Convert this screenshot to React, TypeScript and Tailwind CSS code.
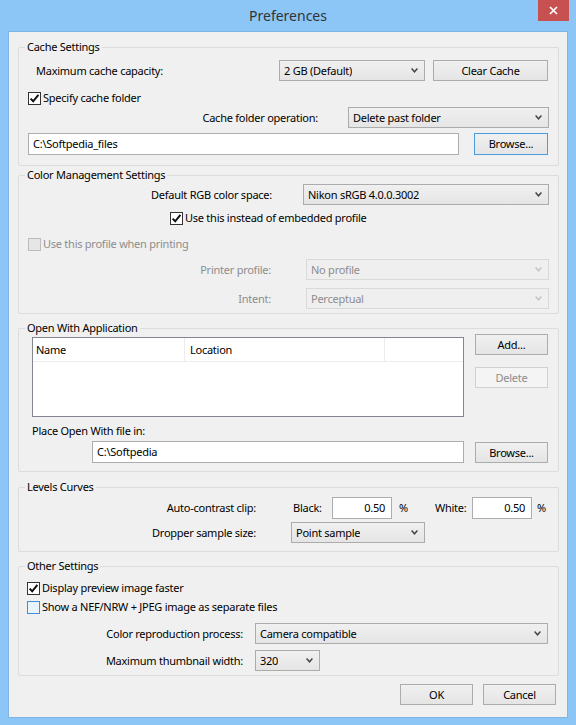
import type { ReactNode } from "react";

function Chevron({ disabled }: { disabled?: boolean }) {
  return (
    <svg width="7" height="5" viewBox="0 0 7 5" className="shrink-0">
      <path
        d="M0.6 0.6 L3.5 3.8 L6.4 0.6"
        fill="none"
        stroke={disabled ? "#c4c4c4" : "#454545"}
        strokeWidth="1.5"
      />
    </svg>
  );
}

function Combo({
  value,
  className = "",
  disabled,
}: {
  value: string;
  className?: string;
  disabled?: boolean;
}) {
  return (
    <div
      className={`flex h-[21px] shrink-0 items-center justify-between border pl-[4px] pr-[6px] ${
        disabled
          ? "border-[#d9d9d9] bg-[#efefef] text-[#8d8d8d]"
          : "border-[#acacac] bg-linear-to-b from-[#f0f0f0] to-[#e5e5e5] text-black"
      } ${className}`}
    >
      <span className="truncate">{value}</span>
      <Chevron disabled={disabled} />
    </div>
  );
}

function Btn({
  children,
  className = "",
  focused,
  disabled,
}: {
  children: ReactNode;
  className?: string;
  focused?: boolean;
  disabled?: boolean;
}) {
  let look = "border-[#acacac] bg-linear-to-b from-[#f0f0f0] to-[#e5e5e5] text-black";
  if (focused) look = "border-[#4a9ae4] bg-linear-to-b from-[#f0f0f0] to-[#e5e5e5] text-black";
  if (disabled) look = "border-[#d0d0d0] bg-[#f4f4f4] text-[#8d8d8d]";
  return (
    <button
      type="button"
      className={`flex h-[21px] shrink-0 items-center justify-center border ${look} ${className}`}
    >
      {children}
    </button>
  );
}

function Check({
  checked,
  disabled,
  hover,
}: {
  checked?: boolean;
  disabled?: boolean;
  hover?: boolean;
}) {
  let look = "border-[#333333] bg-white";
  if (disabled) look = "border-[#bcbcbc] bg-[#e6e6e6]";
  if (hover) look = "border-[#3c8fe0] bg-[#e9f3fd]";
  return (
    <div className={`flex h-[13px] w-[13px] shrink-0 items-center justify-center border ${look}`}>
      {checked && (
        <svg width="11" height="11" viewBox="0 0 11 11">
          <path d="M1.6 5.6 L4.2 8.3 L9.4 1.8" fill="none" stroke="#111" strokeWidth="2" />
        </svg>
      )}
    </div>
  );
}

function Group({
  title,
  className = "",
  children,
}: {
  title: string;
  className?: string;
  children: ReactNode;
}) {
  return (
    <fieldset className={`ml-[9px] w-[541px] rounded-[2px] border border-[#dcdcdc] ${className}`}>
      <legend className="ml-[6px] px-[2px] leading-[16px]">{title}</legend>
      {children}
    </fieldset>
  );
}

export default function App() {
  return (
    <div className="flex h-[725px] w-[576px] flex-col bg-[#8cc6f7] font-['Noto_Sans',sans-serif] text-[11px] leading-[16px] tracking-[-0.25px] text-black">
      <div className="relative flex h-[31px] shrink-0 items-center justify-center">
        <span className="text-[14px] tracking-normal text-[#333]">Preferences</span>
        <div className="absolute right-[7px] top-0 flex h-[21px] w-[31px] items-center justify-center bg-[#c75050]">
          <svg width="9" height="9" viewBox="0 0 9 9">
            <path d="M1 1 L8 8 M8 1 L1 8" stroke="#fff" strokeWidth="1.7" />
          </svg>
        </div>
      </div>

      <div className="mx-[8px] mb-[7px] flex flex-1 flex-col border border-[#7fb4e6] bg-[#f0f0f0]">
        {/* Cache Settings */}
        <Group title="Cache Settings" className="mt-[7px] pb-[10px]">
          <div className="mt-[5px] flex items-center">
            <span className="ml-[17px] w-[243px]">Maximum cache capacity:</span>
            <Combo value="2 GB (Default)" className="w-[146px]" />
            <Btn className="ml-[8px] w-[115px]">Clear Cache</Btn>
          </div>
          <div className="mt-[9px] flex h-[16px] items-center gap-[2px] pl-[9px]">
            <Check checked />
            <span>Specify cache folder</span>
          </div>
          <div className="mt-[1px] flex items-center justify-end pr-[9px]">
            <span className="mr-[30px]">Cache folder operation:</span>
            <Combo value="Delete past folder" className="w-[201px]" />
          </div>
          <div className="mt-[5px] flex items-center pl-[9px]">
            <div className="flex h-[22px] w-[431px] items-center border border-[#abadb3] bg-white pl-[4px]">
              C:\Softpedia_files
            </div>
            <Btn focused className="ml-[15px] h-[22px] w-[74px]">
              Browse...
            </Btn>
          </div>
        </Group>

        {/* Color Management */}
        <Group title="Color Management Settings" className="mt-[1px] pb-[4px]">
          <div className="mt-[1px] flex items-center justify-end pr-[9px]">
            <span className="mr-[31px]">Default RGB color space:</span>
            <Combo value="Nikon sRGB 4.0.0.3002" className="w-[246px]" />
          </div>
          <div className="mt-[5px] flex h-[16px] items-center gap-[2px] pl-[151px]">
            <Check checked />
            <span>Use this instead of embedded profile</span>
          </div>
          <div className="mt-[10px] flex h-[16px] items-center gap-[2px] pl-[9px] text-[#8d8d8d]">
            <Check disabled />
            <span>Use this profile when printing</span>
          </div>
          <div className="mt-[7px] flex items-center justify-end pr-[9px] text-[#8d8d8d]">
            <span className="mr-[35px]">Printer profile:</span>
            <Combo disabled value="No profile" className="w-[243px]" />
          </div>
          <div className="mt-[8px] flex items-center justify-end pr-[9px] text-[#8d8d8d]">
            <span className="mr-[35px]">Intent:</span>
            <Combo disabled value="Perceptual" className="w-[243px]" />
          </div>
        </Group>

        {/* Open With Application */}
        <Group title="Open With Application" className="mt-[6px] pb-[8px]">
          <div className="-mt-[2px] flex items-start pl-[13px]">
            <div className="mt-[3px] h-[80px] w-[432px] border border-[#828790] bg-white">
              <div className="flex h-[24px] items-center border-b border-[#ececec]">
                <div className="flex h-full w-[152px] items-center border-r border-[#ececec] pl-[3px]">Name</div>
                <div className="flex h-full w-[200px] items-center border-r border-[#ececec] pl-[5px]">Location</div>
              </div>
            </div>
            <div className="ml-[11px] flex flex-col">
              <Btn className="w-[73px]">Add...</Btn>
              <Btn disabled className="mt-[12px] w-[73px]">
                Delete
              </Btn>
            </div>
          </div>
          <div className="mt-[6px] flex h-[16px] items-center pl-[13px]">Place Open With file in:</div>
          <div className="mt-[2px] flex items-end pl-[73px]">
            <div className="flex h-[22px] w-[372px] items-center border border-[#abadb3] bg-white pl-[4px]">
              C:\Softpedia
            </div>
            <Btn className="ml-[11px] w-[73px]">Browse...</Btn>
          </div>
        </Group>

        {/* Levels Curves */}
        <Group title="Levels  Curves" className="mt-[7px] pb-[8px]">
          <div className="mt-[2px] flex items-center">
            <span className="w-[237px] text-right">Auto-contrast clip:</span>
            <span className="ml-[37px] w-[39px]">Black:</span>
            <div className="flex h-[22px] w-[60px] items-center justify-end border border-[#abadb3] bg-white pr-[6px]">
              0.50
            </div>
            <span className="ml-[7px] w-[36px]">%</span>
            <span className="w-[37px]">White:</span>
            <div className="flex h-[22px] w-[60px] items-center justify-end border border-[#abadb3] bg-white pr-[6px]">
              0.50
            </div>
            <span className="ml-[5px]">%</span>
          </div>
          <div className="mt-[3px] flex items-center">
            <span className="w-[237px] text-right">Dropper sample size:</span>
            <Combo value="Point sample" className="ml-[35px] w-[134px]" />
          </div>
        </Group>

        {/* Other Settings */}
        <Group title="Other Settings" className="mt-[6px] pb-[4px]">
          <div className="mt-[6px] flex h-[16px] items-center gap-[2px] pl-[8px]">
            <Check checked />
            <span>Display preview image faster</span>
          </div>
          <div className="mt-[3px] flex h-[16px] items-center gap-[2px] pl-[8px]">
            <Check hover />
            <span>Show a NEF/NRW + JPEG image as separate files</span>
          </div>
          <div className="mt-[8px] flex items-center">
            <span className="w-[224px] text-right">Color reproduction process:</span>
            <Combo value="Camera compatible" className="ml-[12px] w-[293px]" />
          </div>
          <div className="mt-[6px] flex items-center">
            <span className="w-[224px] text-right">Maximum thumbnail width:</span>
            <Combo value="320" className="ml-[12px] w-[65px]" />
          </div>
        </Group>

        <div className="mt-[8px] flex justify-end gap-[10px] pr-[11px]">
          <Btn className="w-[73px]">OK</Btn>
          <Btn className="w-[73px]">Cancel</Btn>
        </div>
      </div>
    </div>
  );
}
